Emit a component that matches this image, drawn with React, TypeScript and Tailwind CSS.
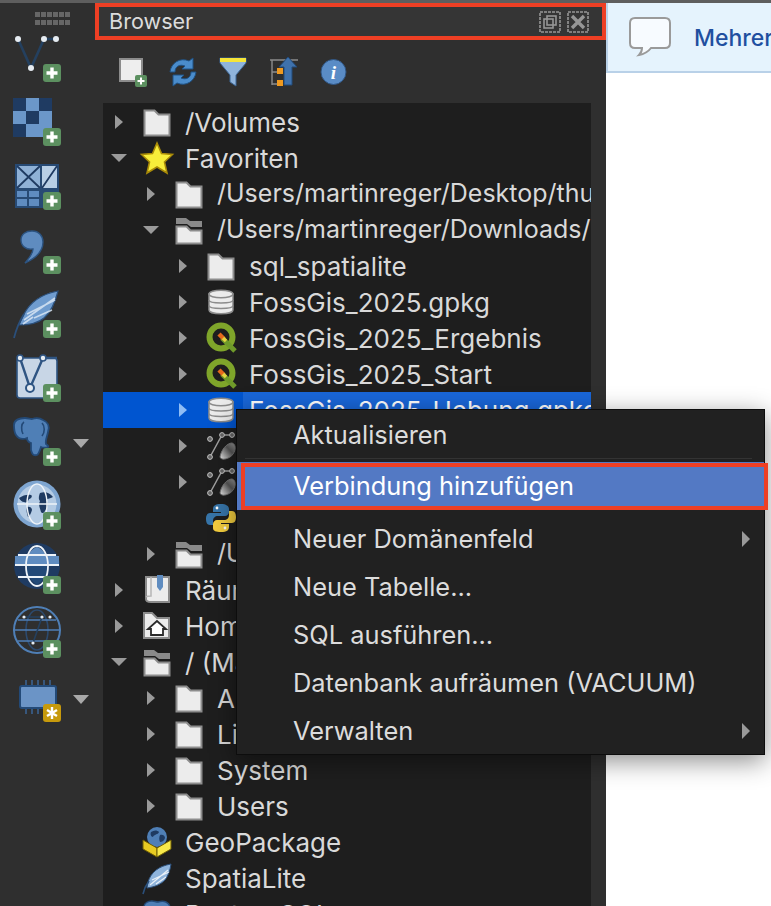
import { ReactNode } from "react";

const font = { fontFamily: "Inter, 'Liberation Sans', sans-serif" };

function PlusBadge({ color = "#5c9060" }: { color?: string }) {
  return (
    <g>
      <rect x="43" y="37" width="18" height="18" rx="3" fill={color} />
      <path d="M52 40.5v11M46.5 46h11" stroke="#fff" strokeWidth="3.4" />
    </g>
  );
}

const sideIcons: ReactNode[] = [
  <g key="v">
    <path d="M18 12l13 29 13-29h12" fill="none" stroke="#24405f" strokeWidth="2.6" />
    {[[18, 12], [44, 12], [56, 12], [31, 41]].map(([x, y]) => (
      <circle key={x} cx={x} cy={y} r="3" fill="#e6ecf2" />
    ))}
    <PlusBadge />
  </g>,
  <g key="raster">
    <rect x="13" y="7" width="39" height="39" fill="#6b97c9" />
    <path d="M13 7h13v13H13zM39 7h13v13H39zM26 20h13v13H26zM13 33h13v13H13z" fill="#1f3b62" />
    <PlusBadge />
  </g>,
  <g key="mesh">
    <rect x="15" y="9" width="44" height="44" fill="#274a74" />
    <rect x="17" y="11" width="23" height="22" fill="#8fb1d6" />
    <rect x="42" y="11" width="15" height="22" fill="#b8cfe6" />
    <path d="M17 11l23 22M40 11L17 33M57 11L42 33" stroke="#1f3b62" strokeWidth="1.8" />
    <path d="M17 36h10v6H17zM29 36h10v6H29zM17 44h10v7H17zM29 44h10v7H29z" fill="#5f8cc0" />
    <PlusBadge />
  </g>,
  <g key="comma">
    <path d="M21 21c0-6 5-9 11-9 7 0 11 5 11 11 0 10-9 17-18 21 4-5 8-9 8-14-7 1-12-3-12-9z" fill="#5f8cc0" stroke="#2c5482" strokeWidth="1.4" />
    <PlusBadge />
  </g>,
  <g key="feather">
    <path d="M58 8c-16 3-28 10-35 25l-4 9c8 0 18-1 25-7 7-6 11-15 14-27z" fill="#6f9ccf" stroke="#2b4f7a" strokeWidth="1.2" />
    <path d="M24 37l31-22M27 31l28-14M34 35l18-8M23 41L33 34" stroke="#dfeaf6" strokeWidth="1.6" opacity="0.8" />
    <path d="M14 55c2-8 5-16 10-24" fill="none" stroke="#2b4f7a" strokeWidth="1.8" />
    <PlusBadge />
  </g>,
  <g key="vertex">
    <rect x="17" y="11" width="40" height="40" rx="3" fill="#c8d6e6" stroke="#2f5583" strokeWidth="1.6" />
    <path d="M20 11l10 30 13-30h14" fill="none" stroke="#2f5583" strokeWidth="2.4" />
    <circle cx="30" cy="41" r="4" fill="#e6ecf2" stroke="#2f5583" strokeWidth="2" />
    <circle cx="43" cy="11" r="3" fill="#e6ecf2" stroke="#2f5583" strokeWidth="1.6" />
    <circle cx="20" cy="11" r="3" fill="#e6ecf2" stroke="#2f5583" strokeWidth="1.6" />
    <PlusBadge />
  </g>,
  <g key="pg">
    <path d="M14 14c0-5 5-7 11-7 3 0 5 1 7 1 3-1 8-1 11 1 5 2 7 6 5 12-1 5-3 9-2 12 1 1 3 2 2 3-3 1-5 1-7 0-1 3-2 7-4 8-4 1-5-1-6-5v-7c-3-1-4-3-4-5-5 2-9 0-11-3-2-3-2-6-2-10z" fill="#4f7fb6" stroke="#234a78" strokeWidth="1.8" />
    <path d="M24 11c-3 2-3 8-1 12M42 12c3 3 3 9 0 13" fill="none" stroke="#234a78" strokeWidth="1.6" />
    <PlusBadge />
    <polygon points="73,28 89,28 81,37" fill="#a9a9a9" />
  </g>,
  <g key="wms">
    <circle cx="37" cy="29" r="23.5" fill="#7ea5d0" />
    <circle cx="37" cy="29" r="19.5" fill="#b4cbe4" />
    <path d="M19 23c4-3 9-4 12-3 2 1 0 4-2 4-1 3-3 4-5 3-2 0-4-2-5-4zM27 32c3-1 5 1 5 3-1 3-2 6-4 7-1-3-2-6-1-10zM40 18c5-2 10 0 13 4-3 2-5 1-7 3 2 2 2 7-1 11-1 2-3 3-4 1-1-4-3-7-1-11-2-2-1-6 0-8z" fill="#1f3b62" />
    <ellipse cx="37" cy="29" rx="10" ry="20" fill="none" stroke="#eef3f8" strokeWidth="1.4" />
    <path d="M17 29h40" stroke="#eef3f8" strokeWidth="1.4" />
    <PlusBadge />
  </g>,
  <g key="wcs">
    <circle cx="37" cy="27" r="23" fill="#1f3b62" />
    <path d="M15 17h44v9H15z" fill="#5f8cc0" />
    <path d="M26 27c0-10 5-17 11-19 6 2 11 9 11 19H26z" fill="#5f8cc0" />
    <path d="M26 27h22c0 8-5 15-11 19-6-4-11-11-11-19z" fill="#234a78" />
    <ellipse cx="37" cy="27" rx="11" ry="20" fill="none" stroke="#eef3f8" strokeWidth="1.8" />
    <path d="M18 16h38M15 26h44M18 38h38" stroke="#eef3f8" strokeWidth="1.8" />
    <PlusBadge />
  </g>,
  <g key="wfs">
    <circle cx="37" cy="27" r="23" fill="none" stroke="#4f7fb6" strokeWidth="2" />
    <ellipse cx="37" cy="27" rx="11" ry="20" fill="none" stroke="#2c4a6e" strokeWidth="1.6" />
    <path d="M18 17h38M14 27h46M18 38h38" stroke="#4f7fb6" strokeWidth="1.4" />
    <path d="M24 14l18 0M42 14l-9 26" stroke="#24405f" strokeWidth="1.6" />
    {[[24, 14], [42, 14], [50, 14], [33, 40]].map(([x, y]) => (
      <circle key={x} cx={x} cy={y} r="1.6" fill="#e6ecf2" />
    ))}
    <PlusBadge />
  </g>,
  <g key="chip">
    <path d="M26 13v6M32 13v6M38 13v6M44 13v6M50 13v6M26 41v6M32 41v6M38 41v6" stroke="#3b6698" strokeWidth="1.5" />
    <rect x="20" y="19" width="36" height="22" rx="2" fill="#6b94c6" stroke="#234a78" strokeWidth="2" />
    <rect x="43" y="37" width="18" height="18" rx="3" fill="#c79a0c" />
    <path d="M52 40v12M47 43l10 6M57 43l-10 6" stroke="#fff" strokeWidth="2.4" />
    <polygon points="73,28 89,28 81,37" fill="#a9a9a9" />
  </g>,
];

function Chevron({ kind, light }: { kind: "closed" | "open" | "none"; light?: boolean }) {
  if (kind === "none") return <span className="w-4 shrink-0" />;
  return (
    <svg width="16" height="16" viewBox="0 0 16 16" className="shrink-0">
      {kind === "closed" ? (
        <polygon points="4,1 12,8 4,15" fill={light ? "#8fbdf5" : "#9a9a9a"} />
      ) : (
        <polygon points="0,4 16,4 8,12" fill="#9a9a9a" />
      )}
    </svg>
  );
}

function Folder() {
  return <path d="M2.5 3.5h10l4 4h11v21h-25z" fill="#ececec" stroke="#8c8c8c" strokeWidth="2" />;
}

function OpenFolder() {
  return (
    <g>
      <path d="M2 3h10l4 3h12v6H17l-4-3H2z" fill="#8a8a8a" />
      <path d="M2.5 11.5h10l4 4h11v13h-25z" fill="#ececec" stroke="#8c8c8c" strokeWidth="2" />
    </g>
  );
}

function Db() {
  return (
    <g fill="#ececec" stroke="#8c8c8c" strokeWidth="1.5">
      <path d="M3 7v16c0 5 24 5 24 0V7z" />
      <ellipse cx="15" cy="7" rx="12" ry="3.8" />
      <path d="M3 13c0 4 24 4 24 0M3 18.5c0 4 24 4 24 0" fill="none" />
    </g>
  );
}

function Qgis() {
  return (
    <g>
      <circle cx="15" cy="14" r="11.5" fill="none" stroke="#7fa52a" strokeWidth="6" />
      <path d="M16 15l13 13" stroke="#6f9a2a" strokeWidth="5" />
      <path d="M13 11l5 5" stroke="#e56a1c" strokeWidth="4.5" />
      <path d="M17 15l3 3" stroke="#e3d540" strokeWidth="3.4" />
    </g>
  );
}

function VectorFile() {
  return (
    <g>
      <defs>
        <linearGradient id="blob" x1="0" y1="1" x2="1" y2="0">
          <stop offset="0" stopColor="#e8e8e8" />
          <stop offset="0.6" stopColor="#555555" />
          <stop offset="1" stopColor="#9a9a9a" />
        </linearGradient>
      </defs>
      <path d="M4 26L16 4h10" stroke="#a0a0a0" strokeWidth="1.5" fill="none" />
      <circle cx="4" cy="8" r="2.4" fill="#666" stroke="#c4c4c4" />
      <circle cx="4" cy="26" r="2.4" fill="#666" stroke="#c4c4c4" />
      <circle cx="16" cy="4" r="2.4" fill="#666" stroke="#c4c4c4" />
      <circle cx="26" cy="4" r="2.4" fill="#666" stroke="#c4c4c4" />
      <path d="M14 26c1-7 7-14 12-14 4 1 4 7 1 11-3 5-12 7-13 3z" fill="url(#blob)" stroke="#777" />
    </g>
  );
}

function Python() {
  return (
    <g>
      <path d="M15 1c-6 0-8 2-8 5v3h8v1H4c-3 0-4 3-4 6s1 6 4 6h3v-4c0-3 2-5 5-5h7c2 0 4-2 4-4V6c0-3-3-5-8-5z" fill="#3775a9" />
      <path d="M15 29c6 0 8-2 8-5v-3h-8v-1h11c3 0 4-3 4-6s-1-6-4-6h-3v4c0 3-2 5-5 5h-7c-2 0-4 2-4 4v4c0 3 3 4 8 4z" fill="#f5cf3f" />
      <circle cx="11" cy="5" r="1.4" fill="#fff" />
      <circle cx="19" cy="25" r="1.4" fill="#fff" />
    </g>
  );
}

function Star() {
  return (
    <polygon
      points="15,0 19.5,10.5 30.5,11.5 22.5,19 25,30 15,24 5,30 7.5,19 -0.5,11.5 10.5,10.5"
      fill="#f8ee3a"
      stroke="#a98b08"
      strokeWidth="1.6"
    />
  );
}

function Bookmarks() {
  return (
    <g>
      <path d="M4 2h23v25H9c-3 0-5-1-5-3z" fill="#ececec" stroke="#8c8c8c" strokeWidth="2" />
      <path d="M4 22c1-1 3-1 5-1V2" fill="none" stroke="#b5b5b5" strokeWidth="1.5" />
      <path d="M15 0h6v12l-3 4-3-4z" fill="#5f8cc0" />
    </g>
  );
}

function HomeFolder() {
  return (
    <g>
      <path d="M2 2h8l5 5h12v20H2z" fill="#ececec" stroke="#8c8c8c" strokeWidth="2" />
      <path d="M15 10l-9 8h3v6h12v-6h3z" fill="#fff" stroke="#2a2a2a" strokeWidth="1.8" />
    </g>
  );
}

function GeoPackage() {
  return (
    <g>
      <circle cx="15" cy="10" r="10" fill="#4f7fb6" />
      <path d="M9 5c3-2 6-2 8 0-1 3-5 2-6 5-2 0-3-3-2-5zM18 8c3-1 5 1 5 3-1 3-3 4-5 4-1-2-1-5 0-7z" fill="#1f3b62" />
      <path d="M1 13l14 8v9L1 22z" fill="#e8cb22" stroke="#6e5e05" strokeWidth="1" />
      <path d="M29 13l-14 8v9l14-8z" fill="#f7e84a" stroke="#6e5e05" strokeWidth="1" />
    </g>
  );
}

function SpatiaLite() {
  return (
    <g>
      <path d="M29 1C17 3 9 9 6 19l-1 6c7-1 13-3 18-8 3-4 5-9 6-16z" fill="#8fb4dc" stroke="#2b4f7a" strokeWidth="1" />
      <path d="M8 22L26 7M10 17l17-8M14 21l10-7" stroke="#fff" strokeWidth="1.2" opacity="0.8" />
      <path d="M1 31c1-5 3-9 6-13" fill="none" stroke="#2b4f7a" strokeWidth="1.6" />
    </g>
  );
}

function Elephant() {
  return (
    <path d="M2 8c0-4 4-6 8-6 2 0 4 1 6 1 3-1 6-1 8 0 4 2 5 5 4 10-1 3-2 7-1 9l1 2-5 1-2 5c-3 1-4 0-5-3v-5c-2 0-3-2-3-4-4 1-7 0-9-2-2-2-2-5-2-8z" fill="#4f7fb6" stroke="#234a78" strokeWidth="1.4" />
  );
}

function TreeRow({ pad, chevron, icon, label, selected, path }: { pad: string; chevron: "closed" | "open" | "none"; icon: ReactNode; label: string; selected?: boolean; path?: boolean }) {
  const size = path ? "text-[25px]" : "text-[26px]";
  return (
    <div className={`flex h-9 shrink-0 items-center ${pad} ${selected ? "bg-[#0055d0]" : ""}`}>
      <Chevron kind={chevron} light={selected} />
      <svg width="30" height="30" viewBox="0 0 30 30" className="ml-[15px] shrink-0 overflow-visible">
        {icon}
      </svg>
      {selected ? (
        <span className="ml-[7px] flex flex-1 items-center self-stretch whitespace-nowrap bg-[#1966d8] pl-[6px] text-[26px] text-white">{label}</span>
      ) : (
        <span className={`ml-[13px] whitespace-nowrap ${size} text-[#d9d9d9]`}>{label}</span>
      )}
    </div>
  );
}

function MenuItem({ label, arrow }: { label: string; arrow?: boolean }) {
  return (
    <div className="flex h-12 items-center justify-between pl-[56px] pr-[14px] text-[25.4px] text-[#dcdcdc]">
      <span>{label}</span>
      {arrow && (
        <svg width="8" height="16" viewBox="0 0 8 16">
          <polygon points="0,0 8,8 0,16" fill="#9a9a9a" />
        </svg>
      )}
    </div>
  );
}

export default function App() {
  return (
    <div className="relative flex h-[906px] w-[771px] flex-col overflow-hidden bg-[#2f2f2f]" style={font}>
      <div className="h-[3px] shrink-0 bg-[#5e5e5e]" />
      <div className="flex min-h-0 flex-1">
        {/* left toolbar */}
        <div className="flex w-[95px] shrink-0 flex-col">
          <div className="ml-[35px] mt-[9px] grid h-[15px] w-[35px] grid-cols-6 gap-px">
            {Array.from({ length: 12 }).map((_, i) => (
              <span key={i} className="h-[5px] w-[5px] bg-[#666]" />
            ))}
          </div>
          {sideIcons.map((icon, i) => (
            <svg key={i} width="95" height="64" viewBox="0 0 95 64" className="shrink-0">
              {icon}
            </svg>
          ))}
        </div>

        {/* browser panel */}
        <div className="flex w-[511px] shrink-0 flex-col">
          <div className="flex h-[37px] shrink-0 items-center justify-between border-4 border-[#ee3f24] bg-[#353535] pl-[10px] pr-[13px]">
            <span className="text-[21.6px] text-[#dcdcdc]">Browser</span>
            <div className="flex gap-[6px]">
              <svg width="22" height="22" viewBox="0 0 22 22" fill="none" stroke="#969696" strokeWidth="1.6">
                <rect x="1" y="1" width="20" height="20" strokeDasharray="3 1" />
                <rect x="8" y="5" width="9" height="9" />
                <rect x="5" y="8" width="9" height="9" />
              </svg>
              <svg width="22" height="22" viewBox="0 0 22 22" fill="none" stroke="#969696">
                <rect x="1" y="1" width="20" height="20" strokeWidth="1.6" strokeDasharray="3 1" />
                <path d="M5 5l12 12M17 5L5 17" strokeWidth="3.4" />
              </svg>
            </div>
          </div>

          <div className="flex h-[63px] shrink-0 items-center gap-[22px] pl-[23px]">
            <svg width="29" height="30" viewBox="0 0 29 30">
              <rect x="2" y="2" width="22" height="22" fill="#eeeeee" stroke="#8c8c8c" strokeWidth="2" />
              <rect x="17" y="18" width="12" height="12" rx="2" fill="#5c9060" />
              <path d="M23 20.5v7M19.5 24h7" stroke="#fff" strokeWidth="2" />
            </svg>
            <svg width="28" height="30" viewBox="0 0 28 30">
              <path d="M1 15C2 6 11 0 20 4l4-3v11H13l3-3c-5-2-10 0-10 6z" fill="#4a8ccb" stroke="#1f5285" />
              <path d="M27 15c-1 9-10 15-19 11l-4 3V18h11l-3 3c5 2 10 0 10-6z" fill="#4a8ccb" stroke="#1f5285" />
            </svg>
            <svg width="28" height="30" viewBox="0 0 28 30">
              <path d="M1 1h26v5L17 18v11l-6-4v-7L1 6z" fill="#8fb4dc" stroke="#3c6696" />
              <rect x="1" y="1" width="26" height="4" fill="#f5e53a" />
            </svg>
            <svg width="29" height="30" viewBox="0 0 29 30">
              <path d="M1 3h28M3 3v25M3 15h7M3 27h7" stroke="#8c8c8c" strokeWidth="1.4" fill="none" />
              <rect x="8" y="11" width="6" height="6" fill="#f09a1f" />
              <rect x="8" y="23" width="6" height="6" fill="#f09a1f" />
              <path d="M19 0l9 10h-5v18h-8V10h-5z" fill="#3f72ad" stroke="#234a78" />
            </svg>
            <svg width="27" height="30" viewBox="0 0 27 30">
              <circle cx="13.5" cy="15" r="12.5" fill="#5a8cc6" stroke="#2f5583" />
              <text x="13.5" y="22" textAnchor="middle" fontSize="19" fontWeight="700" fontStyle="italic" fontFamily="'Liberation Serif', serif" fill="#fff">i</text>
            </svg>
          </div>

          <div className="ml-2 flex min-h-0 w-[488px] flex-1 flex-col overflow-hidden bg-[#1e1e1e] pt-px">
            <TreeRow pad="pl-2" chevron="closed" icon={<Folder />} label="/Volumes" />
            <TreeRow pad="pl-2" chevron="open" icon={<Star />} label="Favoriten" />
            <TreeRow pad="pl-10" chevron="closed" icon={<Folder />} label="/Users/martinreger/Desktop/thuringen" path />
            <TreeRow pad="pl-10" chevron="open" icon={<OpenFolder />} label="/Users/martinreger/Downloads/FossGis" path />
            <TreeRow pad="pl-[72px]" chevron="closed" icon={<Folder />} label="sql_spatialite" />
            <TreeRow pad="pl-[72px]" chevron="closed" icon={<Db />} label="FossGis_2025.gpkg" />
            <TreeRow pad="pl-[72px]" chevron="closed" icon={<Qgis />} label="FossGis_2025_Ergebnis" />
            <TreeRow pad="pl-[72px]" chevron="closed" icon={<Qgis />} label="FossGis_2025_Start" />
            <TreeRow pad="pl-[72px]" chevron="closed" icon={<Db />} label="FossGis_2025_Uebung.gpkg" selected />
            <TreeRow pad="pl-[72px]" chevron="closed" icon={<VectorFile />} label="Gemeinden.shp" />
            <TreeRow pad="pl-[72px]" chevron="closed" icon={<VectorFile />} label="Kreise.shp" />
            <TreeRow pad="pl-[72px]" chevron="none" icon={<Python />} label="script.py" />
            <TreeRow pad="pl-10" chevron="closed" icon={<OpenFolder />} label="/Users/martinreger" path />
            <TreeRow pad="pl-2" chevron="closed" icon={<Bookmarks />} label="Räumliche Lesezeichen" />
            <TreeRow pad="pl-2" chevron="closed" icon={<HomeFolder />} label="Home" />
            <TreeRow pad="pl-2" chevron="open" icon={<OpenFolder />} label="/ (Macintosh HD)" />
            <TreeRow pad="pl-10" chevron="closed" icon={<Folder />} label="Applications" />
            <TreeRow pad="pl-10" chevron="closed" icon={<Folder />} label="Library" />
            <TreeRow pad="pl-10" chevron="closed" icon={<Folder />} label="System" />
            <TreeRow pad="pl-10" chevron="closed" icon={<Folder />} label="Users" />
            <TreeRow pad="pl-2" chevron="none" icon={<GeoPackage />} label="GeoPackage" />
            <TreeRow pad="pl-2" chevron="none" icon={<SpatiaLite />} label="SpatiaLite" />
            <TreeRow pad="pl-2" chevron="none" icon={<Elephant />} label="PostgreSQL" />
          </div>
        </div>

        {/* right pane */}
        <div className="min-w-0 flex-1 bg-white">
          <div className="flex h-[70px] items-center border-b-2 border-l-2 border-[#b9d1e8] bg-[#e5f3fd] pl-[21px]">
            <svg width="42" height="40" viewBox="0 0 42 40" className="shrink-0">
              <path d="M6 1h30c3 0 5 2 5 5v20c0 3-2 5-5 5H22c-3 4-6 6-12 7 2-2 3-4 3-7H6c-3 0-5-2-5-5V6c0-3 2-5 5-5z" fill="#f7fbff" stroke="#9a9a9a" strokeWidth="2" />
            </svg>
            <span className="ml-[23px] whitespace-nowrap pt-[2px] text-[23px] font-medium text-[#1f4fa0]">Mehrere</span>
          </div>
        </div>
      </div>

      {/* context menu */}
      <div className="absolute left-[236px] top-[409px] h-[346px] w-[529px] border border-[#0d0d0d] bg-[#212121] pt-px shadow-[0_6px_24px_rgba(0,0,0,0.45)]">
        <div className="h-[47px]">
          <MenuItem label="Aktualisieren" />
        </div>
        <div className="ml-2 mr-3 h-px bg-[#333333]" />
        <div className="relative mb-[5px] mt-[3px] h-12 bg-[#5379c4]">
          <div className="flex h-12 items-center pl-[56px] text-[25.4px] text-white">Verbindung hinzufügen</div>
          <div className="absolute -right-1 bottom-0 left-1 top-px border-4 border-[#ee3f24]" />
        </div>
        <MenuItem label="Neuer Domänenfeld" arrow />
        <MenuItem label="Neue Tabelle..." />
        <MenuItem label="SQL ausführen..." />
        <MenuItem label="Datenbank aufräumen (VACUUM)" />
        <MenuItem label="Verwalten" arrow />
      </div>
    </div>
  );
}
